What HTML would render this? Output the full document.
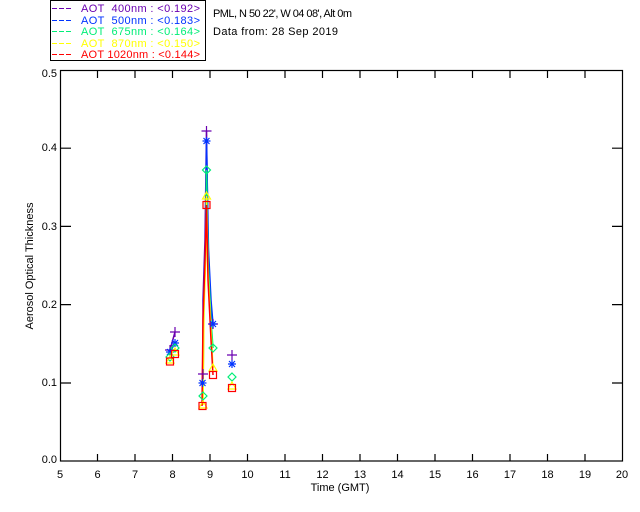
<!DOCTYPE html>
<html><head><meta charset="utf-8"><style>
html,body{margin:0;padding:0;background:#fff;width:640px;height:512px;overflow:hidden}
svg{display:block}
text{font-family:"Liberation Sans",sans-serif;font-size:11px}
</style></head><body>
<svg width="640" height="512" viewBox="0 0 640 512" xmlns="http://www.w3.org/2000/svg">
<rect width="640" height="512" fill="#fff"/>
<!-- legend -->
<rect x="50.5" y="0.5" width="155" height="60" fill="none" stroke="#000"/>
<g stroke-width="1" stroke-dasharray="5,2">
<path d="M52 8.5h21" stroke="#6a00b0"/><path d="M52 20.5h21" stroke="#0033ff"/><path d="M52 31.5h21" stroke="#00ee77"/><path d="M52 43.5h21" stroke="#ffff00"/><path d="M52 54.5h21" stroke="#ff0000"/>
</g>
<g font-size="11">
<text x="81" y="12" fill="#6a00b0" textLength="119" lengthAdjust="spacing" xml:space="preserve">AOT  400nm : &lt;0.192&gt;</text>
<text x="81" y="24" fill="#0033ff" textLength="119" lengthAdjust="spacing" xml:space="preserve">AOT  500nm : &lt;0.183&gt;</text>
<text x="81" y="35" fill="#00ee77" textLength="119" lengthAdjust="spacing" xml:space="preserve">AOT  675nm : &lt;0.164&gt;</text>
<text x="81" y="47" fill="#ffff00" textLength="119" lengthAdjust="spacing" xml:space="preserve">AOT  870nm : &lt;0.150&gt;</text>
<text x="81" y="58" fill="#ff0000" textLength="119" lengthAdjust="spacing" xml:space="preserve">AOT 1020nm : &lt;0.144&gt;</text>
</g>
<text x="213" y="17" fill="#000" textLength="139" lengthAdjust="spacing">PML, N 50 22', W 04 08', Alt 0m</text>
<text x="213" y="35" fill="#000" textLength="125" lengthAdjust="spacing">Data from: 28 Sep 2019</text>
<!-- frame -->
<rect x="60.5" y="70.5" width="562" height="390.5" fill="none" stroke="#000" stroke-width="1.2"/>
<g stroke="#000" stroke-width="1.2">
<path d="M97.5 461v-7M135 461v-7M172.5 461v-7M210 461v-7M247.5 461v-7M285 461v-7M322.5 461v-7M360 461v-7M397.5 461v-7M435 461v-7M472.5 461v-7M510 461v-7M547.5 461v-7M585 461v-7
M97.5 71v7M135 71v7M172.5 71v7M210 71v7M247.5 71v7M285 71v7M322.5 71v7M360 71v7M397.5 71v7M435 71v7M472.5 71v7M510 71v7M547.5 71v7M585 71v7
M61 383h10M61 304.6h10M61 226.4h10M61 148.2h10M622 383h-10M622 304.6h-10M622 226.4h-10M622 148.2h-10"/>
</g>
<g fill="#000" text-anchor="end">
<text x="57" y="463">0.0</text><text x="57" y="386">0.1</text><text x="57" y="308">0.2</text><text x="57" y="230">0.3</text><text x="57" y="151">0.4</text><text x="57" y="77">0.5</text>
</g>
<g fill="#000" text-anchor="middle">
<text x="60" y="478">5</text><text x="97.5" y="478">6</text><text x="135" y="478">7</text><text x="172.5" y="478">8</text><text x="210" y="478">9</text><text x="247.5" y="478">10</text><text x="285" y="478">11</text><text x="322.5" y="478">12</text><text x="360" y="478">13</text><text x="397.5" y="478">14</text><text x="435" y="478">15</text><text x="472.5" y="478">16</text><text x="510" y="478">17</text><text x="547.5" y="478">18</text><text x="585" y="478">19</text><text x="622" y="478">20</text>
<text x="340" y="491">Time (GMT)</text>
</g>
<text transform="translate(33,266) rotate(-90)" text-anchor="middle" font-size="10" fill="#000">Aerosol Optical Thickness</text>
<!-- data lines -->
<g fill="none" stroke-width="1.5">
<polyline stroke="#6a00b0" points="170,350 175,332"/>
<polyline stroke="#0033ff" points="170,352 175,343"/>
<polyline stroke="#6a00b0" points="203,374 203,300 205,240 206.5,131 208,240 210,300 213,324"/>
<polyline stroke="#0033ff" points="202.5,383 203.5,300 205.5,240 206.5,141 208.5,250 211,300 213,324"/>
<polyline stroke="#00ee77" points="203,396 204,300 206,240 206.5,170 208,260 211,320 213,348"/>
<polyline stroke="#ffff00" points="203,405 204,310 206,250 206.5,196 208,270 211,330 213,368"/>
<polyline stroke="#ff0000" points="202,406 203,320 205,260 206.5,205 208,280 211,340 213,375"/>
</g>
<!-- markers -->
<g fill="none" stroke-width="1.2">
<g stroke="#6a00b0"><path d="M170 345v10M165 350h10M175 327v10M170 332h10M203 369v10M198 374h10M206.5 126v10M201.5 131h10M213 319v10M208 324h10M232 350v10M227 355h10"/></g>
<g stroke="#0033ff"><path d="M166 352h8M170 348v8M167 349l6 6M173 349l-6 6"/>
<path d="M171 343h8M175 339v8M172 340l6 6M178 340l-6 6"/>
<path d="M198.5 383h8M202.5 379v8M199.5 380l6 6M205.5 380l-6 6"/>
<path d="M202.5 141h8M206.5 137v8M203.5 138l6 6M209.5 138l-6 6"/>
<path d="M209 324h8M213 320v8M210 321l6 6M216 321l-6 6"/>
<path d="M228 364h8M232 360v8M229 361l6 6M235 361l-6 6"/></g>
<g stroke="#00ee77"><path d="M170 353l4 4-4 4-4-4zM175 344l4 4-4 4-4-4zM203 392l4 4-4 4-4-4zM206.5 166l4 4-4 4-4-4zM213 344l4 4-4 4-4-4zM232 373l4 4-4 4-4-4z"/></g>
<g stroke="#ffff00"><path d="M170 356l4 7h-8zM175 348l4 7h-8zM203 401l4 7h-8zM206.5 192l4 7h-8zM213 364l4 7h-8zM232 382l4 7h-8z"/></g>
<g stroke="#ff0000"><rect x="166.5" y="358" width="7" height="7"/><rect x="171.5" y="350.5" width="7" height="7"/><rect x="199" y="402.5" width="7" height="7"/><rect x="203" y="201.5" width="7" height="7"/><rect x="209.5" y="371.5" width="7" height="7"/><rect x="228.5" y="384.5" width="7" height="7"/></g>
</g>
</svg>
</body></html>
